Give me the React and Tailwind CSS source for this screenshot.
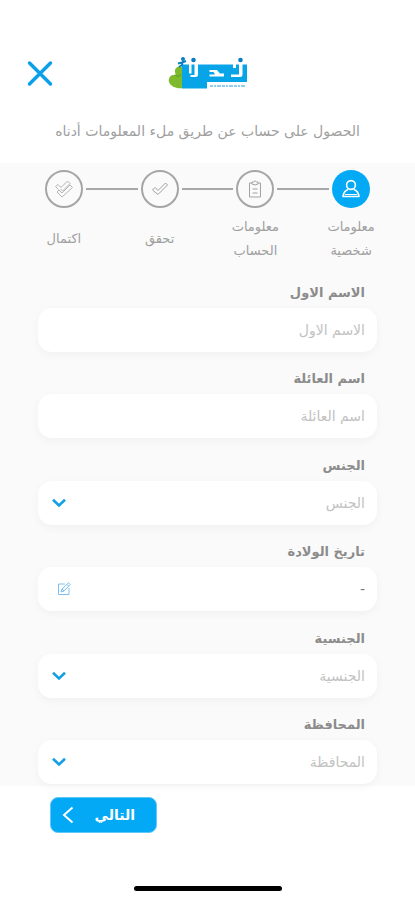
import React from 'react';

function Logo() {
  return (
    <svg viewBox="0 0 80 34" className="h-[34px] w-20" role="img" aria-label="نحن">
      <path d="M14 11 C9 9 5 13 8 19 C3 18 0 22 1 26 C3 31 9 33 15 32 V11 Z" fill="#7fba2c" />
      <path d="M7 19 Q11 22 13 18" fill="none" stroke="#559b29" strokeWidth="1" />
      <path d="M14 8.500 H79 V26 H39 V32.500 H14 Z" fill="#08a4e8" />
      <path d="M21 7 H23.500 V17.500 H21 Z M26.500 7 H30 V18.500 Q30 21 27.500 21 H22.500 V19 H26.500 Z" fill="#fff" />
      <path d="M41.500 14 H49 L52 17.500 H56 V20.500 H41.500 V18.500 H47 L45.500 16 H41.500 Z" fill="#fff" />
      <path d="M65 7 H68 V12 H65 Z M71 7 H74.500 V18.500 Q74.500 21 72 21 H63 V18.500 H71 Z" fill="#fff" />
      <circle cx="25.500" cy="4" r="2.300" fill="#087fc0" />
      <circle cx="72.500" cy="4" r="2.300" fill="#087fc0" />
      <circle cx="15" cy="3" r="2" fill="#087fc0" />
      <path d="M10 7.500 L14 6.500 L18 5 M15 5 L14 9 L11 11" fill="none" stroke="#087fc0" strokeWidth="2" />
      <path d="M42 30 H78" stroke="#8fd0f0" strokeWidth="2" strokeDasharray="3 1 2 1 4 1" />
    </svg>
  );
}

function PersonIcon() {
  return (
    <svg viewBox="0 0 20 20" className="size-5" fill="none" stroke="#fff" strokeWidth="1.6" strokeLinejoin="round">
      <circle cx="10" cy="6" r="4.4" />
      <path d="M7 10.5 C4.500 11.500 2.500 13.500 2 17.500 H18 C17.500 13.500 15.500 11.500 13 10.500" />
      <path d="M4 15.500 H16" strokeWidth="1" />
    </svg>
  );
}

function ClipboardIcon() {
  return (
    <svg viewBox="0 0 20 20" className="size-5" fill="none" stroke="#a3a3a3" strokeWidth="1">
      <path d="M7 4 H4.500 V18 H15.500 V4 H13" />
      <path d="M7 3 H8.500 Q10 0.500 11.500 3 H13 V5 Q10 7 7 5 Z M7.500 10 H12.500 M7.500 14 H12.500" />
    </svg>
  );
}

function CheckIcon() {
  return (
    <svg viewBox="0 0 20 20" className="size-5" fill="none" stroke="#a0a0a0" strokeWidth="1" strokeLinejoin="round">
      <path d="M2.500 11 L5 8.500 L8 11.500 L15.500 4 L17.500 6 L8 15.500 Z" />
    </svg>
  );
}

function DoubleCheckIcon() {
  return (
    <svg viewBox="0 0 20 20" className="size-5" fill="none" stroke="#b4b4b4" strokeWidth="1" strokeLinejoin="round">
      <path d="M3 13 L5 11 L8 14 L16 6 L18.500 8.500 L8 18 Z" />
      <path d="M4.500 10.500 L1.500 7.500 L4 5.500 L7 8.500 L13.500 2 L16 4.500 L8.500 12 L6.500 10" />
    </svg>
  );
}

function EditIcon() {
  return (
    <svg viewBox="0 0 14 14" className="size-[14px]" fill="none" stroke="#7cc0f3" strokeWidth="1">
      <path d="M8 2 H1.500 V12.500 H12 V6" />
      <path d="M4 10 L5 7 L11.500 0.800 L13.200 2.500 L7 9 Z M5 7 L7 9 M10 2.500 L11.500 4" />
    </svg>
  );
}

function Chevron() {
  return (
    <svg viewBox="0 0 14 10" className="h-[10px] w-[14px]" fill="none" stroke="#159fe5" strokeWidth="2.600">
      <path d="M1 1.800 L7 7.500 L13 1.800" />
    </svg>
  );
}

const steps = [
  { label: 'معلومات شخصية', icon: <PersonIcon />, active: true },
  { label: 'معلومات الحساب', icon: <ClipboardIcon /> },
  { label: 'تحقق', icon: <CheckIcon /> },
  { label: 'اكتمال', icon: <DoubleCheckIcon /> },
];

const fields = [
  { id: 'first-name', label: 'الاسم الاول', kind: 'text' },
  { id: 'family-name', label: 'اسم العائلة', kind: 'text' },
  { id: 'gender', label: 'الجنس', kind: 'select' },
  { id: 'birth-date', label: 'تاريخ الولادة', kind: 'date' },
  { id: 'nationality', label: 'الجنسية', kind: 'select' },
  { id: 'governorate', label: 'المحافظة', kind: 'select' },
];

const boxClass =
  'h-11 w-full appearance-none rounded-[14px] bg-white px-3 text-sm shadow-[0_3px_10px_rgba(0,0,0,0.04)] outline-none';

function Step({ step, first, last }) {
  return (
    <li className="flex flex-col items-center gap-[7px]" aria-current={step.active ? 'step' : undefined}>
      <div className="flex w-full items-center gap-[3px]">
        <span className={first ? 'h-[2px] flex-1' : 'h-[2px] flex-1 bg-[#a8a8a8]'} />
        <span
          className={
            step.active
              ? 'flex size-[38px] items-center justify-center rounded-full bg-[#03a9f4]'
              : 'flex size-[38px] items-center justify-center rounded-full border-2 border-[#a6a6a6]'
          }
        >
          {step.icon}
        </span>
        <span className={last ? 'h-[2px] flex-1' : 'h-[2px] flex-1 bg-[#a8a8a8]'} />
      </div>
      <div className="flex h-12 w-16 items-center justify-center text-center text-[13px] leading-6 text-[#a0a0a0]">
        {step.label}
      </div>
    </li>
  );
}

function Field({ field }) {
  return (
    <div>
      <label htmlFor={field.id} className="block px-3 pb-[5px] text-[13px] leading-5 font-bold text-[#8c8c8c]">
        {field.label}
      </label>
      <div className="relative">
        {field.kind === 'text' && (
          <input id={field.id} type="text" placeholder={field.label} className={`${boxClass} placeholder:text-[#c2c2c2]`} />
        )}
        {field.kind === 'date' && (
          <input id={field.id} type="text" defaultValue="-" className={`${boxClass} text-[#777777]`} />
        )}
        {field.kind === 'select' && (
          <select id={field.id} className={`${boxClass} text-[#c2c2c2]`}>
            <option>{field.label}</option>
          </select>
        )}
        {field.kind === 'select' && (
          <span className="pointer-events-none absolute inset-y-0 left-[14px] flex items-center">
            <Chevron />
          </span>
        )}
        {field.kind === 'date' && (
          <span className="pointer-events-none absolute inset-y-0 left-[19px] flex items-center">
            <EditIcon />
          </span>
        )}
      </div>
    </div>
  );
}

export default function App() {
  return (
    <div dir="rtl" className="flex min-h-screen flex-col bg-white font-['DejaVu_Sans',sans-serif]">
      <header className="px-6 pt-14 pb-5">
        <div className="grid grid-cols-[1fr_auto_1fr] items-center">
          <span />
          <Logo />
          <button type="button" aria-label="إغلاق" className="justify-self-end">
            <svg viewBox="0 0 32 32" className="size-8" fill="none" stroke="#0a9fe8" strokeWidth="3.500" strokeLinecap="round">
              <path d="M5.500 6 L26.500 27 M26.500 6 L5.500 27" />
            </svg>
          </button>
        </div>
        <p className="mt-[29px] text-center text-sm leading-6 whitespace-nowrap text-[#a0a0a0]">
          الحصول على حساب عن طريق ملء المعلومات أدناه
        </p>
      </header>

      <main className="flex flex-1 flex-col bg-[#fafafa] pt-[7px] pb-[2px]">
        <ol className="grid grid-cols-4 px-4">
          {steps.map((step, i) => (
            <Step key={step.label} step={step} first={i === 0} last={i === steps.length - 1} />
          ))}
        </ol>
        <form className="mt-5 flex flex-1 flex-col justify-between px-[38px]">
          {fields.map((field) => (
            <Field key={field.id} field={field} />
          ))}
        </form>
      </main>

      <footer className="flex flex-col gap-[53px] px-[50px] pt-[11px] pb-[9px]">
        <button
          type="button"
          className="flex h-9 w-[107px] items-center justify-between self-end rounded-lg border border-[#60c7f8] bg-[#03a9f4] pr-[21px] pl-[11px] text-sm font-bold text-white"
        >
          <span>التالي</span>
          <svg viewBox="0 0 12 18" className="h-[18px] w-3" fill="none" stroke="#fff" strokeWidth="2">
            <path d="M10.500 1.500 L2 9 L10.500 16.500" />
          </svg>
        </button>
        <div className="h-[5px] w-[148px] self-center rounded-full bg-black" />
      </footer>
    </div>
  );
}
